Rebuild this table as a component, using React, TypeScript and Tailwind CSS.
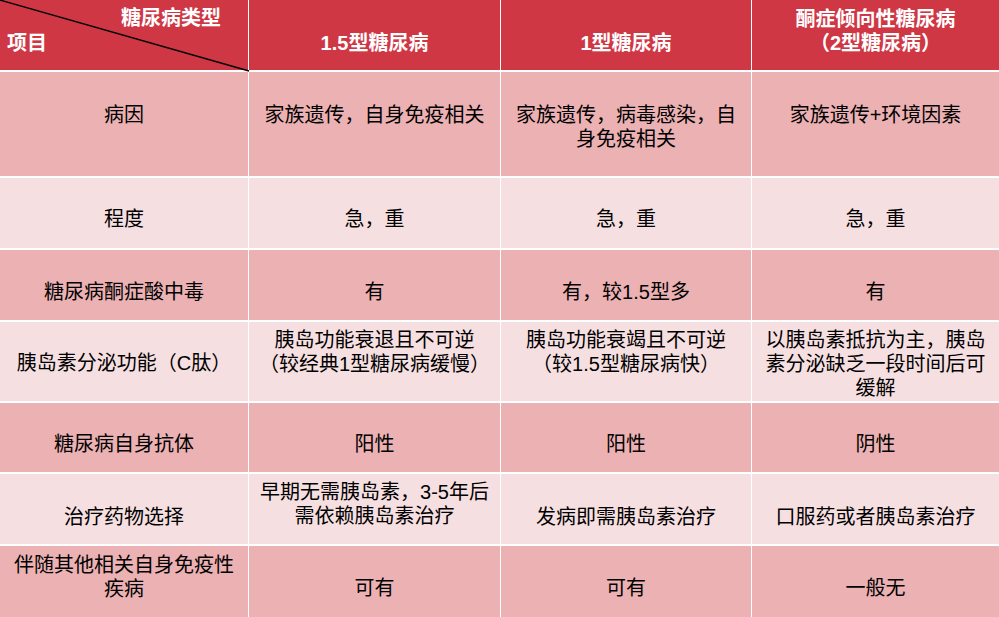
const font = "font-['Liberation_Sans','Noto_Sans_CJK_SC',sans-serif]";

type Cell = { text: React.ReactNode; pt: string };
type Row = { tone: "dark" | "light"; cells: Cell[] };

const rows: Row[] = [
  {
    tone: "dark",
    cells: [
      { text: "病因", pt: "pt-[31px]" },
      { text: "家族遗传，自身免疫相关", pt: "pt-[31px]" },
      { text: "家族遗传，病毒感染，自身免疫相关", pt: "pt-[31px]" },
      { text: "家族遗传+环境因素", pt: "pt-[31px]" },
    ],
  },
  {
    tone: "light",
    cells: [
      { text: "程度", pt: "pt-[29px]" },
      { text: "急，重", pt: "pt-[29px]" },
      { text: "急，重", pt: "pt-[29px]" },
      { text: "急，重", pt: "pt-[29px]" },
    ],
  },
  {
    tone: "dark",
    cells: [
      { text: "糖尿病酮症酸中毒", pt: "pt-[30px]" },
      { text: "有", pt: "pt-[30px]" },
      { text: "有，较1.5型多", pt: "pt-[30px]" },
      { text: "有", pt: "pt-[30px]" },
    ],
  },
  {
    tone: "light",
    cells: [
      { text: "胰岛素分泌功能（C肽）", pt: "pt-[29px]" },
      { text: <>胰岛功能衰退且不可逆<br />（较经典1型糖尿病缓慢）</>, pt: "pt-[6px]" },
      { text: <>胰岛功能衰竭且不可逆<br />（较1.5型糖尿病快）</>, pt: "pt-[6px]" },
      { text: "以胰岛素抵抗为主，胰岛素分泌缺乏一段时间后可缓解", pt: "pt-[6px]" },
    ],
  },
  {
    tone: "dark",
    cells: [
      { text: "糖尿病自身抗体", pt: "pt-[29px]" },
      { text: "阳性", pt: "pt-[29px]" },
      { text: "阳性", pt: "pt-[29px]" },
      { text: "阴性", pt: "pt-[29px]" },
    ],
  },
  {
    tone: "light",
    cells: [
      { text: "治疗药物选择", pt: "pt-[31px]" },
      { text: <>早期无需胰岛素，3-5年后<br />需依赖胰岛素治疗</>, pt: "pt-[6px]" },
      { text: "发病即需胰岛素治疗", pt: "pt-[31px]" },
      { text: "口服药或者胰岛素治疗", pt: "pt-[31px]" },
    ],
  },
  {
    tone: "dark",
    cells: [
      { text: <>伴随其他相关自身免疫性<br />疾病</>, pt: "pt-[7px]" },
      { text: "可有", pt: "pt-[30px]" },
      { text: "可有", pt: "pt-[30px]" },
      { text: "一般无", pt: "pt-[30px]" },
    ],
  },
];

export default function App() {
  return (
    <div className={`w-[999px] h-[617px] bg-white overflow-hidden ${font}`}>
      <div className="grid grid-cols-[248px_251px_250px_247px] grid-rows-[70px_104px_70px_70px_79px_69px_70px_71px] gap-x-px gap-y-[2px] bg-white">
        {/* header */}
        <div className="relative bg-[#cf3745] text-white font-bold text-[20px] leading-[24px] flex flex-col pt-[6px]">
          <div className="text-right pr-[27px]">糖尿病类型</div>
          <div className="pl-[7px] pt-[1px]">项目</div>
          <svg className="absolute left-0 top-0 overflow-visible" width="248" height="70">
            <line x1="0" y1="0" x2="249" y2="71" stroke="#000" strokeWidth="1.3" />
          </svg>
        </div>
        <div className="bg-[#cf3745] text-white font-bold text-[20px] leading-[24px] text-center pt-[31px]">1.5型糖尿病</div>
        <div className="bg-[#cf3745] text-white font-bold text-[20px] leading-[24px] text-center pt-[31px]">1型糖尿病</div>
        <div className="bg-[#cf3745] text-white font-bold text-[20px] leading-[24px] text-center pt-[7px]">
          酮症倾向性糖尿病
          <br />
          （2型糖尿病）
        </div>

        {rows.map((row, i) =>
          row.cells.map((c, j) => (
            <div
              key={`${i}-${j}`}
              className={`${row.tone === "dark" ? "bg-[#ecb1b3]" : "bg-[#f6dfe0]"} text-black text-[20px] leading-[24px] text-center px-2 ${c.pt}`}
            >
              {c.text}
            </div>
          ))
        )}
      </div>
    </div>
  );
}
